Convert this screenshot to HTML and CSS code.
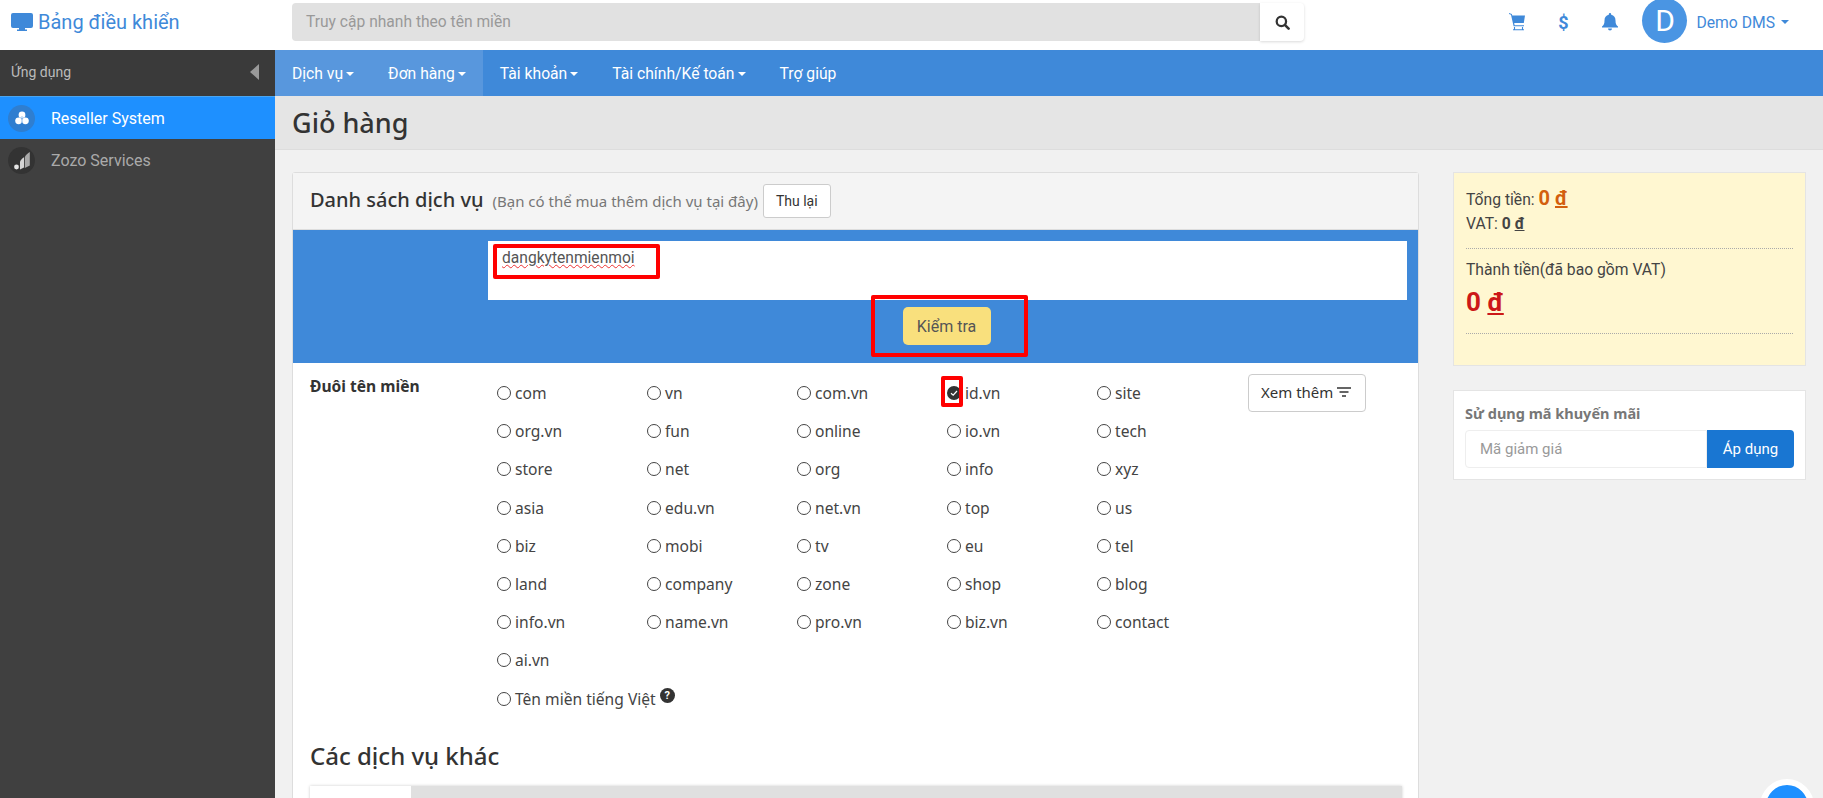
FILE: index.html
```html
<!DOCTYPE html>
<html lang="vi">
<head>
    <meta charset="UTF-8">
    <title>Giỏ hàng</title>
    <link rel="stylesheet" href="styles.css">
</head>
<body>
    <header class="topbar">
        <a class="brand">
            <svg class="brand_icon" viewBox="0 0 22 18" width="22" height="18"><path fill="#3f89d9" d="M2 0h18a2 2 0 0 1 2 2v11a2 2 0 0 1-2 2h-6v1.500h2V18H6v-1.500h2V15H2a2 2 0 0 1-2-2V2a2 2 0 0 1 2-2z"/></svg>
            <span>Bảng điều khiển</span>
        </a>
        <div class="quick_search">
            <div class="quick_input">Truy cập nhanh theo tên miền</div>
            <div class="quick_btn">
                <svg viewBox="0 0 16 16" width="15" height="15"><circle cx="6.800" cy="6.800" r="5" fill="none" stroke="#333" stroke-width="2.400"/><path d="M10.500 10.500l4 4" stroke="#333" stroke-width="2.800" stroke-linecap="round"/></svg>
            </div>
        </div>
        <div class="top_right">
            <svg class="top_icon" viewBox="0 0 16 18" width="16" height="18"><path fill="#3f89d9" d="M0 0l2.800 1 .5 1.500H16l-1.200 7.500H5.200l.4 2.200H15v1H4.600L2 1.800 0 1z"/><path d="M5.500 14v2.500M13.500 14v2.500M4 16.700h11" fill="none" stroke="#3f89d9" stroke-width="1.100"/></svg>
            <span class="top_dollar">$</span>
            <svg class="top_icon" viewBox="0 0 16 18" width="16" height="18"><path fill="#3f89d9" d="M8 0a1.200 1.200 0 0 1 1.200 1.200v.6c2.800.6 4.300 2.700 4.300 5.600 0 3.400.8 4.800 2.500 6.100v1H0v-1c1.700-1.300 2.500-2.700 2.500-6.100 0-2.900 1.500-5 4.300-5.600v-.6A1.200 1.200 0 0 1 8 0zM6 15.500h4a2 2 0 0 1-4 0z"/></svg>
            <div class="avatar">D</div>
            <span class="user_name">Demo DMS</span>
            <span class="caret caret_blue"></span>
        </div>
    </header>

    <div class="layout">
        <aside class="sidebar">
            <div class="side_head">
                <span>Ứng dụng</span>
                <span class="side_arrow"></span>
            </div>
            <div class="side_item active">
                <span class="side_icon">
                    <svg viewBox="0 0 14 14" width="14" height="14"><circle cx="7" cy="4" r="3.400" fill="#fff"/><circle cx="3.600" cy="9.800" r="3.400" fill="#fff"/><circle cx="10.400" cy="9.800" r="3.400" fill="#fff"/><path d="M7 5v7M5 6.500l2 1 2-1" fill="none" stroke="#7fb3ea" stroke-width=".7"/></svg>
                </span>
                <span>Reseller System</span>
            </div>
            <div class="side_item">
                <span class="side_icon">
                    <svg viewBox="0 0 16 18" width="16" height="18"><circle cx="2.500" cy="15" r="2.400" fill="#e5e5e5"/><path fill="#d5d5d5" d="M6 9.500C7 7.500 8.500 6 10 5.200V15.500L6 17.500z"/><path fill="#aaa" d="M10.800 5c1-2 3-4 5-5v13.500L10.800 16z"/></svg>
                </span>
                <span>Zozo Services</span>
            </div>
        </aside>

        <main class="main">
            <nav class="menu">
                <a class="menu_item light">Dịch vụ<span class="caret"></span></a>
                <a class="menu_item light">Đơn hàng<span class="caret"></span></a>
                <a class="menu_item">Tài khoản<span class="caret"></span></a>
                <a class="menu_item">Tài chính/Kế toán<span class="caret"></span></a>
                <a class="menu_item">Trợ giúp</a>
            </nav>
            <div class="page_title"><h1>Giỏ hàng</h1></div>

            <div class="page_body">
                <section class="card">
                    <div class="card_head">
                        <h2>Danh sách dịch vụ</h2>
                        <span class="card_note">(Bạn có thể mua thêm dịch vụ tại đây)</span>
                        <button class="btn_plain">Thu lại</button>
                    </div>
                    <div class="domain_box">
                        <div class="domain_input">
                            <span class="domain_text">dangkytenmienmoi</span>
                            <span class="mark mark_text"></span>
                        </div>
                        <div class="check_row">
                            <span class="mark mark_check"></span>
                            <button class="btn_check">Kiểm tra</button>
                        </div>
                    </div>
                    <div class="ext_row">
                        <div class="ext_label">Đuôi tên miền</div>
                        <div class="ext_grid">
                            <label class="ext"><span class="radio"></span>com</label>
                            <label class="ext"><span class="radio"></span>vn</label>
                            <label class="ext"><span class="radio"></span>com.vn</label>
                            <label class="ext"><span class="radio checked"><svg viewBox="0 0 14 14" width="14" height="14"><circle cx="7" cy="7" r="7" fill="#333"/><path d="M4 7.200l2.200 2 3.800-4.200" fill="none" stroke="#fff" stroke-width="1.200"/></svg><span class="mark mark_radio"></span></span>id.vn</label>
                            <label class="ext"><span class="radio"></span>site</label>
                            <label class="ext"><span class="radio"></span>org.vn</label>
                            <label class="ext"><span class="radio"></span>fun</label>
                            <label class="ext"><span class="radio"></span>online</label>
                            <label class="ext"><span class="radio"></span>io.vn</label>
                            <label class="ext"><span class="radio"></span>tech</label>
                            <label class="ext"><span class="radio"></span>store</label>
                            <label class="ext"><span class="radio"></span>net</label>
                            <label class="ext"><span class="radio"></span>org</label>
                            <label class="ext"><span class="radio"></span>info</label>
                            <label class="ext"><span class="radio"></span>xyz</label>
                            <label class="ext"><span class="radio"></span>asia</label>
                            <label class="ext"><span class="radio"></span>edu.vn</label>
                            <label class="ext"><span class="radio"></span>net.vn</label>
                            <label class="ext"><span class="radio"></span>top</label>
                            <label class="ext"><span class="radio"></span>us</label>
                            <label class="ext"><span class="radio"></span>biz</label>
                            <label class="ext"><span class="radio"></span>mobi</label>
                            <label class="ext"><span class="radio"></span>tv</label>
                            <label class="ext"><span class="radio"></span>eu</label>
                            <label class="ext"><span class="radio"></span>tel</label>
                            <label class="ext"><span class="radio"></span>land</label>
                            <label class="ext"><span class="radio"></span>company</label>
                            <label class="ext"><span class="radio"></span>zone</label>
                            <label class="ext"><span class="radio"></span>shop</label>
                            <label class="ext"><span class="radio"></span>blog</label>
                            <label class="ext"><span class="radio"></span>info.vn</label>
                            <label class="ext"><span class="radio"></span>name.vn</label>
                            <label class="ext"><span class="radio"></span>pro.vn</label>
                            <label class="ext"><span class="radio"></span>biz.vn</label>
                            <label class="ext"><span class="radio"></span>contact</label>
                            <label class="ext"><span class="radio"></span>ai.vn</label>
                            <label class="ext ext_wide"><span class="radio"></span>Tên miền tiếng Việt<span class="help">?</span></label>
                        </div>
                        <button class="btn_more">Xem thêm
                            <svg viewBox="0 0 14 10" width="14" height="10"><path d="M0 1h14M2.500 5h9M5 9h4" stroke="#333" stroke-width="1.500"/></svg>
                        </button>
                    </div>
                    <h2 class="other_title">Các dịch vụ khác</h2>
                    <div class="other_table">
                        <div class="other_first"></div>
                        <div class="other_head">Tên dịch vụ</div>
                    </div>
                </section>

                <aside class="summary">
                    <div class="total_box">
                        <div class="total_line">Tổng tiền: <b class="total_orange">0 <u>đ</u></b></div>
                        <div class="total_line">VAT: <b>0 <u>đ</u></b></div>
                        <div class="total_rule"></div>
                        <div class="total_line">Thành tiền(đã bao gồm VAT)</div>
                        <div class="total_big">0 <u>đ</u></div>
                        <div class="total_rule"></div>
                    </div>
                    <div class="promo_box">
                        <div class="promo_title">Sử dụng mã khuyến mãi</div>
                        <div class="promo_form">
                            <div class="promo_input">Mã giảm giá</div>
                            <button class="promo_btn">Áp dụng</button>
                        </div>
                    </div>
                </aside>
            </div>
        </main>
    </div>
    <div class="chat_bubble"></div>
</body>
</html>
```

FILE: styles.css
```css
* {
    box-sizing: border-box;
}
html, body {
    height: 100%;
}
body {
    margin: 0;
    font-family: Roboto, Arial, sans-serif;
    font-size: 14px;
    color: #333;
    background-color: #f1f1f1;
    overflow: hidden;
}
button {
    font-family: inherit;
}
.topbar {
    display: flex;
    align-items: center;
    height: 50px;
    padding-bottom: 6px;
    background-color: #fff;
}
.brand {
    display: flex;
    align-items: center;
    gap: 5px;
    width: 292px;
    padding-left: 11px;
    font-size: 20px;
    color: #3f89d9;
}
.quick_search {
    display: flex;
    width: 1012px;
    height: 38px;
}
.quick_input {
    flex: 1;
    padding: 0 14px;
    font-size: 15.6px;
    line-height: 38px;
    color: #999;
    background-color: #e1e1e1;
    border-radius: 4px 0 0 4px;
}
.quick_btn {
    display: flex;
    align-items: center;
    justify-content: center;
    width: 44px;
    background-color: #fff;
    border-radius: 0 4px 4px 0;
    box-shadow: 0 1px 3px rgba(0,0,0,.15);
}
.top_right {
    display: flex;
    align-items: center;
    margin-left: auto;
    padding-right: 34px;
    color: #3f89d9;
}
.top_icon {
    display: block;
}
.top_dollar {
    width: 16px;
    margin: 0 31px 0 30px;
    font-size: 18px;
    font-weight: 700;
    text-align: center;
}
.avatar {
    width: 45px;
    height: 45px;
    margin-left: 24px;
    margin-top: -4px;
    border-radius: 50%;
    font-size: 30px;
    line-height: 45px;
    text-align: center;
    color: #fff;
    background-color: #4a95e3;
}
.user_name {
    margin-left: 9px;
    font-size: 15.7px;
}
.caret {
    display: inline-block;
    margin-left: 3px;
    vertical-align: middle;
    border-top: 4px solid #fff;
    border-left: 4px solid transparent;
    border-right: 4px solid transparent;
}
.caret_blue {
    margin-left: 6px;
    border-top-color: #3f89d9;
}
.layout {
    display: flex;
    height: 748px;
}
.sidebar {
    flex: none;
    width: 275px;
    background-color: #404040;
}
.side_head {
    display: flex;
    align-items: center;
    justify-content: space-between;
    height: 46px;
    padding: 0 16px 2px 11px;
    color: #bbb;
    background-color: #3a3a3a;
}
.side_arrow {
    border-right: 9px solid #999;
    border-top: 8px solid transparent;
    border-bottom: 8px solid transparent;
}
.side_item {
    display: flex;
    align-items: center;
    gap: 16px;
    height: 43px;
    padding-left: 8px;
    font-size: 16px;
    color: #aaa;
}
.side_item.active {
    color: #fff;
    background-color: #1e90ff;
    border-top: 1px solid #4aa5f0;
}
.side_icon {
    display: flex;
    align-items: center;
    justify-content: center;
    width: 27px;
    height: 27px;
    border-radius: 50%;
    background-color: #333;
}
.active .side_icon {
    background-color: #2f7ed0;
}
.main {
    flex: 1;
    min-width: 0;
}
.menu {
    display: flex;
    height: 46px;
    background-color: #3f89d9;
}
.menu_item {
    display: flex;
    align-items: center;
    padding: 1px 17px 0;
    font-size: 15.7px;
    color: #fff;
}
.menu_item.light {
    background-color: #5897dd;
}
.page_title {
    height: 54px;
    padding-left: 17px;
    background-color: #e5e5e5;
    border-bottom: 1px solid #ddd;
}
h1 {
    margin: 0;
    font-family: "Noto Sans", "Open Sans", sans-serif;
    font-size: 27px;
    font-weight: 500;
    line-height: 54px;
}
.page_body {
    display: flex;
    align-items: flex-start;
    gap: 34px;
    padding: 22px 17px 0;
}
.card {
    flex: none;
    width: 1127px;
    background-color: #fff;
    border: 1px solid #ddd;
    border-radius: 3px;
}
.card_head {
    display: flex;
    align-items: center;
    height: 57px;
    padding-left: 17px;
    background-color: #f4f4f4;
    border-bottom: 1px solid #ddd;
}
h2 {
    margin: 0;
    font-family: "Noto Sans", "Open Sans", sans-serif;
    font-size: 20px;
    font-weight: 500;
}
.card_head h2 {
    margin-bottom: 3px;
}
.card_note {
    margin-left: 9px;
    font-family: "Noto Sans", "Open Sans", sans-serif;
    font-size: 15px;
    color: #777;
}
.btn_plain {
    height: 34px;
    margin-left: 5px;
    padding: 0 12px;
    font-size: 14px;
    color: #333;
    background-color: #fff;
    border: 1px solid #ccc;
    border-radius: 3px;
}
.domain_box {
    padding-top: 11px;
    background-color: #3f89d9;
}
.domain_input {
    position: relative;
    height: 59px;
    margin: 0 11px 0 195px;
    padding: 8px 14px;
    font-size: 15.6px;
    color: #555;
    background-color: #fff;
}
.domain_text {
    text-decoration: underline wavy #e33 1px;
}
.check_row {
    position: relative;
    display: flex;
    justify-content: center;
    margin: 0 13px 0 195px;
    padding: 7px 0 18px;
}
.btn_check {
    width: 88px;
    height: 38px;
    font-size: 16px;
    color: #555;
    background-color: #f9e07d;
    border: none;
    border-radius: 5px;
}
.mark {
    position: absolute;
    border: 4px solid #f00;
    border-radius: 2px;
}
.mark_text {
    left: 5px;
    top: 3px;
    width: 167px;
    height: 35px;
}
.mark_check {
    left: 383px;
    top: -5px;
    width: 157px;
    height: 62px;
}
.mark_radio {
    left: -6px;
    top: -10px;
    width: 22px;
    height: 31px;
}
.ext_row {
    position: relative;
    display: flex;
    padding: 14px 0 0 17px;
}
.ext_label {
    width: 187px;
    margin-top: -2px;
    font-family: "Noto Sans", "Open Sans", sans-serif;
    font-weight: 700;
    font-size: 15.6px;
}
.ext_grid {
    display: grid;
    grid-template-columns: repeat(5, 150px);
    grid-auto-rows: 38.2px;
    width: 750px;
    padding-top: 1px;
}
.ext {
    display: flex;
    align-items: center;
    height: 30px;
    font-family: "Noto Sans", "Open Sans", sans-serif;
    font-size: 15.6px;
    color: #444;
}
.ext_wide {
    grid-column: 1 / 4;
}
.radio {
    position: relative;
    flex: none;
    width: 14px;
    height: 14px;
    margin-right: 4px;
    border: 1px solid #444;
    border-radius: 50%;
}
.radio.checked {
    border: none;
}
.radio svg {
    display: block;
}
.help {
    width: 15px;
    height: 15px;
    margin: -6px 0 0 4px;
    border-radius: 50%;
    font-family: Roboto, Arial, sans-serif;
    font-size: 11px;
    font-weight: 700;
    line-height: 15px;
    text-align: center;
    color: #fff;
    background-color: #333;
}
.btn_more {
    position: absolute;
    top: 11px;
    right: 52px;
    display: flex;
    align-items: center;
    gap: 4px;
    width: 118px;
    height: 38px;
    padding: 0 0 2px 12px;
    font-family: "Noto Sans", "Open Sans", sans-serif;
    font-size: 15px;
    white-space: nowrap;
    color: #333;
    background-color: #fff;
    border: 1px solid #ccc;
    border-radius: 4px;
}
.other_title {
    margin: 18px 0 0 17px;
    font-size: 24px;
    line-height: 32px;
}
.other_table {
    display: flex;
    height: 40px;
    margin: 14px 16px 0 17px;
    box-shadow: 0 0 3px rgba(0,0,0,.2);
}
.other_first {
    width: 101px;
    background-color: #fff;
}
.other_head {
    flex: 1;
    padding-top: 10px;
    text-align: center;
    color: #333;
    background-color: #e0e0e0;
}
.summary {
    flex: none;
    width: 353px;
}
.total_box {
    height: 194px;
    padding: 13px 12px 0;
    background-color: #fff7d1;
    border: 1px solid #e4e4e4;
}
.total_line {
    font-size: 15.7px;
    line-height: 24px;
    color: #444;
}
.total_orange {
    font-size: 20px;
    color: #d35f0e;
}
.total_rule {
    height: 1px;
    margin: 12px 0 9px;
    border-top: 1px dotted #aaa;
}
.total_big {
    margin-top: 2px;
    font-size: 26px;
    font-weight: 700;
    line-height: 37px;
    color: #cc1818;
}
.promo_box {
    height: 90px;
    margin-top: 24px;
    padding: 12px 11px 0 11px;
    background-color: #fff;
    border: 1px solid #e4e4e4;
}
.promo_title {
    font-family: "Noto Sans", "Open Sans", sans-serif;
    font-size: 14.5px;
    font-weight: 700;
    color: #777;
}
.promo_form {
    display: flex;
    height: 38px;
    margin-top: 7px;
}
.promo_input {
    flex: 1;
    padding-left: 14px;
    font-size: 15px;
    line-height: 36px;
    color: #999;
    border: 1px solid #eee;
    border-radius: 4px 0 0 4px;
}
.promo_btn {
    width: 87px;
    font-size: 15px;
    color: #fff;
    background-color: #1976d2;
    border: none;
    border-radius: 0 4px 4px 0;
}
.chat_bubble {
    position: fixed;
    left: 1760px;
    top: 779px;
    width: 54px;
    height: 54px;
    background-color: #1e90ff;
    border: 6px solid #fff;
    border-radius: 50%;
}
```
